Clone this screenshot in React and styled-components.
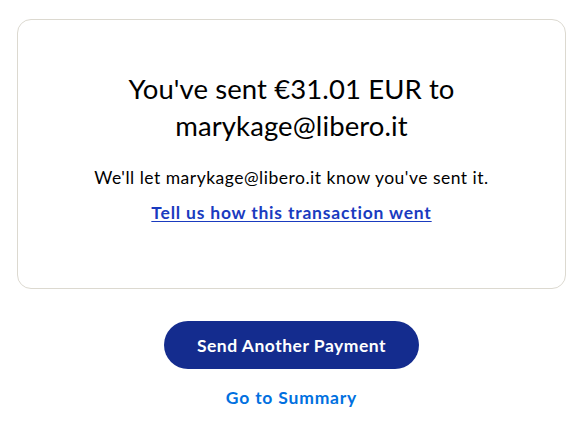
import React from 'react';
import styled, { createGlobalStyle } from 'styled-components';

const GlobalStyle = createGlobalStyle`
  body {
    margin: 0;
    background: #ffffff;
    font-family: Lato, "Noto Sans", sans-serif;
    color: #001435;
  }
`;

const Page = styled.div`
  width: 580px;
  padding: 19px 14px 0 17px;
  box-sizing: border-box;
  display: flex;
  flex-direction: column;
  align-items: center;
`;

const Card = styled.div`
  width: 100%;
  height: 270px;
  box-sizing: border-box;
  border: 1px solid #dcd9d0;
  border-radius: 14px;
  display: flex;
  flex-direction: column;
  align-items: center;
  padding-top: 50px;
`;

const Heading = styled.h1`
  margin: 0;
  font-size: 27.5px;
  font-weight: 400;
  line-height: 37px;
  letter-spacing: 0.1px;
  text-align: center;
  color: #000;
`;

const Note = styled.p`
  margin: 22px 0 0;
  font-size: 17.5px;
  line-height: 24px;
  letter-spacing: 0.5px;
  color: #000;
`;

const FeedbackLink = styled.a`
  margin-top: 11px;
  font-size: 17.5px;
  font-weight: 700;
  line-height: 24px;
  letter-spacing: 0.8px;
  color: #1a3bbf;
  text-decoration: underline;
  text-underline-offset: 2px;
`;

const Actions = styled.div`
  margin-top: 32px;
  display: flex;
  flex-direction: column;
  align-items: center;
  gap: 17px;
`;

const PrimaryButton = styled.button`
  width: 255px;
  height: 48px;
  border: none;
  border-radius: 24px;
  background: #142c8e;
  color: #fff;
  font-family: inherit;
  font-size: 17.5px;
  font-weight: 700;
  letter-spacing: 0.5px;
  cursor: pointer;
`;

const TextLink = styled.a`
  font-size: 17.5px;
  font-weight: 700;
  letter-spacing: 0.8px;
  color: #0070e0;
  text-decoration: none;
  line-height: 24px;
`;

export default function App() {
  return (
    <>
      <GlobalStyle />
      <Page>
        <Card>
          <Heading>
            You've sent €31.01 EUR to
            <br />
            marykage@libero.it
          </Heading>
          <Note>We'll let marykage@libero.it know you've sent it.</Note>
          <FeedbackLink href="#">Tell us how this transaction went</FeedbackLink>
        </Card>
        <Actions>
          <PrimaryButton>Send Another Payment</PrimaryButton>
          <TextLink href="#">Go to Summary</TextLink>
        </Actions>
      </Page>
    </>
  );
}
